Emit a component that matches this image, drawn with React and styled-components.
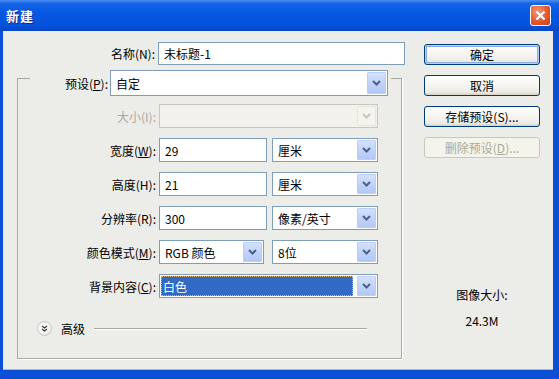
import React from "react";
import styled, { createGlobalStyle } from "styled-components";

const GlobalStyle = createGlobalStyle`
  html, body {
    margin: 0;
    padding: 0;
    background: #ffffff;
  }
  body {
    font-family: "Noto Sans CJK SC", "DejaVu Sans", sans-serif;
    font-size: 12px;
    color: #000;
  }
`;

const Window = styled.div`
  width: 559px;
  height: 379px;
  box-sizing: border-box;
  display: flex;
  flex-direction: column;
  background: #0a4fd6;
  padding: 0 6px 9px 3px;
`;

const TitleBar = styled.div`
  height: 31px;
  margin: 0 -6px 0 -3px;
  display: flex;
  align-items: center;
  justify-content: space-between;
  padding: 0 8px 0 6px;
  background: linear-gradient(
    180deg,
    #4a8cf2 0%,
    #1462e6 12%,
    #0657e2 45%,
    #0353dc 80%,
    #0846c4 100%
  );
`;

const Title = styled.span`
  color: #fff;
  font-weight: 700;
  font-size: 13px;
  letter-spacing: 1px;
  text-shadow: 1px 1px 0 #0a2a8a;
`;

const CloseButton = styled.div`
  width: 21px;
  height: 21px;
  box-sizing: border-box;
  border: 1px solid #fff;
  border-radius: 3px;
  background: radial-gradient(circle at 35% 30%, #f39a7c 0%, #e2582e 55%, #c8401c 100%);
  display: flex;
  align-items: center;
  justify-content: center;
`;

const Body = styled.div`
  flex: 1;
  display: flex;
  background: #ecece9;
  padding: 11px 13px 0 14px;
  border-bottom: 1px solid #9db8ec;
`;

const LeftPane = styled.div`
  width: 388px;
  display: flex;
  flex-direction: column;
`;

const RightPane = styled.div`
  width: 116px;
  margin-left: 19px;
  padding-top: 2px;
  display: flex;
  flex-direction: column;
  gap: 10px;
`;

const Row = styled.div`
  display: grid;
  grid-template-columns: ${(p) => p.$labelWidth || 138}px ${(p) => p.$fieldWidth || 219}px;
  column-gap: 3px;
  height: ${(p) => p.$height || 24}px;
  align-items: center;
`;

const Label = styled.label`
  text-align: right;
  white-space: nowrap;
  color: ${(p) => (p.$disabled ? "#aca899" : "#000")};
  u {
    text-decoration: underline;
  }
`;

const Fields = styled.div`
  display: flex;
  gap: ${(p) => p.$gap || 5}px;
  height: 100%;
`;

const TextBox = styled.div`
  flex: ${(p) => (p.$grow ? 1 : "none")};
  width: ${(p) => (p.$width ? `${p.$width}px` : "auto")};
  box-sizing: border-box;
  height: 100%;
  border: 1px solid #7f9db9;
  background: #fff;
  display: flex;
  align-items: center;
  padding-left: 5px;
  white-space: nowrap;
`;

const Combo = styled.div`
  flex: ${(p) => (p.$grow ? 1 : "none")};
  width: ${(p) => (p.$width ? `${p.$width}px` : "auto")};
  box-sizing: border-box;
  height: 100%;
  border: 1px solid ${(p) => (p.$disabled ? "#c9c7ba" : "#7f9db9")};
  background: ${(p) => (p.$disabled ? "#f2f1ec" : "#fff")};
  display: flex;
  align-items: stretch;
  padding: 1px;
`;

const ComboText = styled.div`
  flex: 1;
  display: flex;
  align-items: center;
  padding-left: ${(p) => (p.$selected ? "2px" : "4px")};
  margin-right: ${(p) => (p.$selected ? "4px" : "0")};
  background: ${(p) => (p.$selected ? "#316ac5" : "transparent")};
  color: ${(p) => (p.$selected ? "#fff" : "#000")};
  outline: ${(p) => (p.$selected ? "1px dotted #d8b070" : "none")};
  outline-offset: -1px;
  white-space: nowrap;
`;

const DropButton = styled.div`
  width: 17px;
  display: flex;
  align-items: center;
  justify-content: center;
  border-radius: 1px;
  background: ${(p) =>
    p.$disabled
      ? "#f4f3ee"
      : "linear-gradient(180deg, #d5e1fc 0%, #c1d3fb 50%, #b4c8f6 100%)"};
  border: 1px solid ${(p) => (p.$disabled ? "#e8e6dc" : "#bccdf7")};
`;

const GroupBox = styled.fieldset`
  margin: 5px 0 0 0;
  width: 385px;
  box-sizing: border-box;
  border: 1px solid #a9a9a3;
  box-shadow: 1px 1px 0 #ffffff;
  padding: 17px 0 21px 0;
  display: flex;
  flex-direction: column;
  gap: 10px;
`;

const Legend = styled.legend`
  margin-left: 12px;
  padding: 0 3px;
  height: 17px;
`;

const PresetRow = styled.div`
  display: grid;
  grid-template-columns: 75px 278px;
  column-gap: 2px;
  height: 26px;
  align-items: center;
  margin-bottom: -9px;
`;

const Advanced = styled.div`
  display: flex;
  align-items: center;
  gap: 9px;
  margin: 12px 0 0 19px;
  width: 330px;
`;

const ToggleCircle = styled.div`
  width: 15px;
  height: 15px;
  box-sizing: border-box;
  border-radius: 50%;
  border: 1px solid #c4c4c0;
  background: radial-gradient(circle at 40% 35%, #ffffff 0%, #f2f2ee 60%, #d6d6d0 100%);
  display: flex;
  align-items: center;
  justify-content: center;
`;

const Rule = styled.div`
  flex: 1;
  height: 1px;
  background: #a9a9a3;
  border-bottom: 1px solid #fff;
`;

const Button = styled.div`
  height: 21px;
  box-sizing: border-box;
  border: 1px solid ${(p) => (p.$disabled ? "#c9c7ba" : "#003c74")};
  border-radius: 3px;
  background: ${(p) =>
    p.$disabled
      ? "#f5f4ea"
      : "linear-gradient(180deg, #ffffff 0%, #f5f4f0 50%, #ecebe6 85%, #d6d0c5 100%)"};
  box-shadow: ${(p) =>
    p.$default ? "inset 0 0 0 1px #b9d1fa, inset 0 0 0 2px #8aaae6" : "none"};
  color: ${(p) => (p.$disabled ? "#aca899" : "#000")};
  display: flex;
  align-items: center;
  justify-content: center;
  white-space: nowrap;
`;

const Info = styled.div`
  margin-top: auto;
  padding-bottom: 40px;
  display: flex;
  flex-direction: column;
  align-items: center;
  gap: 9px;
`;

const Chevron = ({ disabled }) => (
  <svg width="9" height="6" viewBox="0 0 9 6">
    <polyline
      points="1,1 4.5,4.5 8,1"
      fill="none"
      stroke={disabled ? "#c9c7ba" : "#4d6185"}
      strokeWidth="2"
    />
  </svg>
);

const Select = ({ children, width, grow, disabled, selected }) => (
  <Combo $width={width} $grow={grow} $disabled={disabled}>
    <ComboText $selected={selected}>{children}</ComboText>
    <DropButton $disabled={disabled}>
      <Chevron disabled={disabled} />
    </DropButton>
  </Combo>
);

const App = () => (
  <>
    <GlobalStyle />
    <Window>
      <TitleBar>
        <Title>新建</Title>
        <CloseButton>
          <svg width="11" height="11" viewBox="0 0 11 11">
            <path d="M1.5 1.5 L9.5 9.5 M9.5 1.5 L1.5 9.5" stroke="#fff" strokeWidth="2.2" />
          </svg>
        </CloseButton>
      </TitleBar>
      <Body>
        <LeftPane>
          <Row $fieldWidth={247} $height={23}>
            <Label>名称(N):</Label>
            <TextBox>未标题-1</TextBox>
          </Row>
          <GroupBox>
            <Legend>
              <PresetRow>
                <Label>
                  预设(<u>P</u>):
                </Label>
                <Fields>
                  <Select grow>自定</Select>
                </Fields>
              </PresetRow>
            </Legend>
            <Row>
              <Label $disabled>大小(I):</Label>
              <Fields>
                <Select grow disabled />
              </Fields>
            </Row>
            <Row>
              <Label>
                宽度(<u>W</u>):
              </Label>
              <Fields>
                <TextBox $width={108}>29</TextBox>
                <Select grow>厘米</Select>
              </Fields>
            </Row>
            <Row>
              <Label>高度(H):</Label>
              <Fields>
                <TextBox $width={108}>21</TextBox>
                <Select grow>厘米</Select>
              </Fields>
            </Row>
            <Row>
              <Label>分辨率(R):</Label>
              <Fields>
                <TextBox $width={108}>300</TextBox>
                <Select grow>像素/英寸</Select>
              </Fields>
            </Row>
            <Row>
              <Label>
                颜色模式(<u>M</u>):
              </Label>
              <Fields $gap={8}>
                <Select width={105}>RGB 颜色</Select>
                <Select grow>8位</Select>
              </Fields>
            </Row>
            <Row>
              <Label>
                背景内容(<u>C</u>):
              </Label>
              <Fields>
                <Select grow selected>
                  白色
                </Select>
              </Fields>
            </Row>
            <Advanced>
              <ToggleCircle>
                <svg width="7" height="7" viewBox="0 0 7 7">
                  <path d="M1 1 L3.5 3 L6 1 M1 4 L3.5 6 L6 4" fill="none" stroke="#333" strokeWidth="1.2" />
                </svg>
              </ToggleCircle>
              <span>高级</span>
              <Rule />
            </Advanced>
          </GroupBox>
        </LeftPane>
        <RightPane>
          <Button $default>确定</Button>
          <Button>取消</Button>
          <Button>存储预设(S)...</Button>
          <Button $disabled>
            删除预设(<u>D</u>)...
          </Button>
          <Info>
            <span>图像大小:</span>
            <span>24.3M</span>
          </Info>
        </RightPane>
      </Body>
    </Window>
  </>
);

export default App;
